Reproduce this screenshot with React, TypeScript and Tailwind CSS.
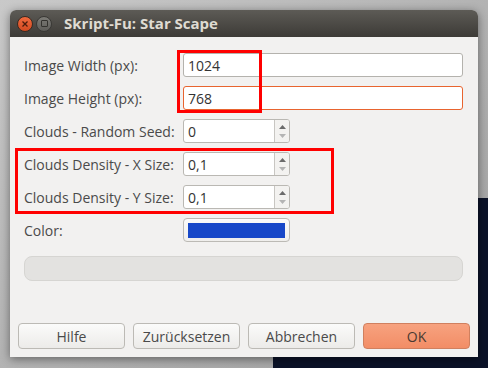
import React from "react";

function SpinButtons() {
  return (
    <div className="flex w-[15px] flex-col items-center justify-center gap-[5px] border-l border-[#c8c6c2] bg-[#f3f2f0]">
      <svg width="7" height="4" viewBox="0 0 7 4">
        <path d="M0 4 L3.5 0 L7 4 Z" fill="#6b6b6b" />
      </svg>
      <svg width="7" height="4" viewBox="0 0 7 4">
        <path d="M0 0 L3.5 4 L7 0 Z" fill="#b4b4b4" />
      </svg>
    </div>
  );
}

function SpinInput({ value }: { value: string }) {
  return (
    <div className="flex h-[24px] w-[107px] overflow-hidden rounded-[3px] border border-[#bab8b3] bg-white">
      <div className="flex flex-1 items-center px-[4px] text-[14px] text-[#333]">{value}</div>
      <SpinButtons />
    </div>
  );
}

function Label({ children }: { children: React.ReactNode }) {
  return <div className="flex h-[24px] items-center text-[14px] text-[#4a4a4a]">{children}</div>;
}

function DialogButton({ children, primary }: { children: React.ReactNode; primary?: boolean }) {
  return (
    <button
      className={
        primary
          ? "h-[26px] w-[107px] rounded-[4px] border border-[#d0805f] bg-gradient-to-b from-[#f7a27f] to-[#f28d66] text-[14px] text-[#4a3a32]"
          : "h-[26px] w-[107px] rounded-[4px] border border-[#bcbab5] bg-gradient-to-b from-[#fbfbfa] to-[#ecebe9] text-[14px] text-[#4a4a4a]"
      }
    >
      {children}
    </button>
  );
}

export default function App() {
  return (
    <div
      className="relative h-[368px] w-[488px] overflow-hidden bg-gradient-to-br from-[#c9c9c9] to-[#9e9e9e]"
      style={{ fontFamily: '"Open Sans", "DejaVu Sans", sans-serif' }}
    >
      {/* Desktop wallpaper peeking out */}
      <div className="absolute left-[478px] top-[198px] h-[170px] w-[10px] bg-[#0b1228]" />
      <div className="absolute left-[273px] top-[357px] h-[11px] w-[215px] bg-[#0b1228]" />

      {/* Window */}
      <div className="absolute left-[10px] top-[10px] flex h-[347px] w-[468px] flex-col overflow-hidden rounded-t-[6px] bg-[#f2f1f0] shadow-[0_2px_10px_rgba(0,0,0,0.45)]">
        {/* Title bar */}
        <div className="flex h-[27px] items-center bg-gradient-to-b from-[#5d5b56] to-[#3d3b37] pl-[7px]">
          <div className="flex h-[16px] w-[16px] items-center justify-center rounded-full border border-[#3a2a22] bg-gradient-to-b from-[#f06a3e] to-[#d24a20]">
            <svg width="6" height="6" viewBox="0 0 6 6">
              <path d="M0.5 0.5 L5.5 5.5 M5.5 0.5 L0.5 5.5" stroke="#4a1c0c" strokeWidth="1.3" />
            </svg>
          </div>
          <div className="ml-[3px] flex h-[16px] w-[16px] items-center justify-center rounded-full border border-[#3a3936] bg-gradient-to-b from-[#7d7c77] to-[#5e5d59]">
            <div className="h-[7px] w-[7px] rounded-[1px] border border-[#34332f]" />
          </div>
          <span className="ml-[12px] text-[15px] font-bold text-[#dfdbd2]">Skript-Fu: Star Scape</span>
        </div>

        {/* Form */}
        <div className="grid grid-cols-[159px_1fr] gap-y-[9px] pl-[14px] pr-[15px] pt-[16px]">
          <Label>Image Width (px):</Label>
          <div className="flex h-[24px] items-center rounded-[3px] border border-[#b4b2ad] bg-white px-[4px] text-[14px] text-[#333]">
            1024
          </div>
          <Label>Image Height (px):</Label>
          <div className="flex h-[24px] items-center rounded-[3px] border border-[#e8642f] bg-white px-[4px] text-[14px] text-[#333]">
            768
          </div>
          <Label>Clouds - Random Seed:</Label>
          <SpinInput value="0" />
          <Label>Clouds Density - X Size:</Label>
          <SpinInput value="0,1" />
          <Label>Clouds Density - Y Size:</Label>
          <SpinInput value="0,1" />
          <Label>Color:</Label>
          <div className="flex h-[24px] w-[107px] items-center rounded-[4px] border border-[#bcbab5] bg-gradient-to-b from-[#fbfbfa] to-[#efeeec] px-[4px]">
            <div className="h-[15px] w-full bg-[#1848c8]" />
          </div>
        </div>

        {/* Progress bar */}
        <div className="ml-[14px] mr-[15px] mt-[14px] h-[25px] rounded-[8px] border border-[#d6d5d2] bg-[#e3e2e0]" />

        {/* Buttons */}
        <div className="mt-auto flex gap-[8px] px-[8px] pb-[8px]">
          <DialogButton>Hilfe</DialogButton>
          <DialogButton>Zurücksetzen</DialogButton>
          <DialogButton>Abbrechen</DialogButton>
          <DialogButton primary>OK</DialogButton>
        </div>
      </div>

      {/* Annotation boxes */}
      <div className="absolute left-[177px] top-[50px] h-[63px] w-[85px] border-[3px] border-[#ff0000]" />
      <div className="absolute left-[15px] top-[148px] h-[66px] w-[319px] border-[3px] border-[#ff0000]" />
    </div>
  );
}
